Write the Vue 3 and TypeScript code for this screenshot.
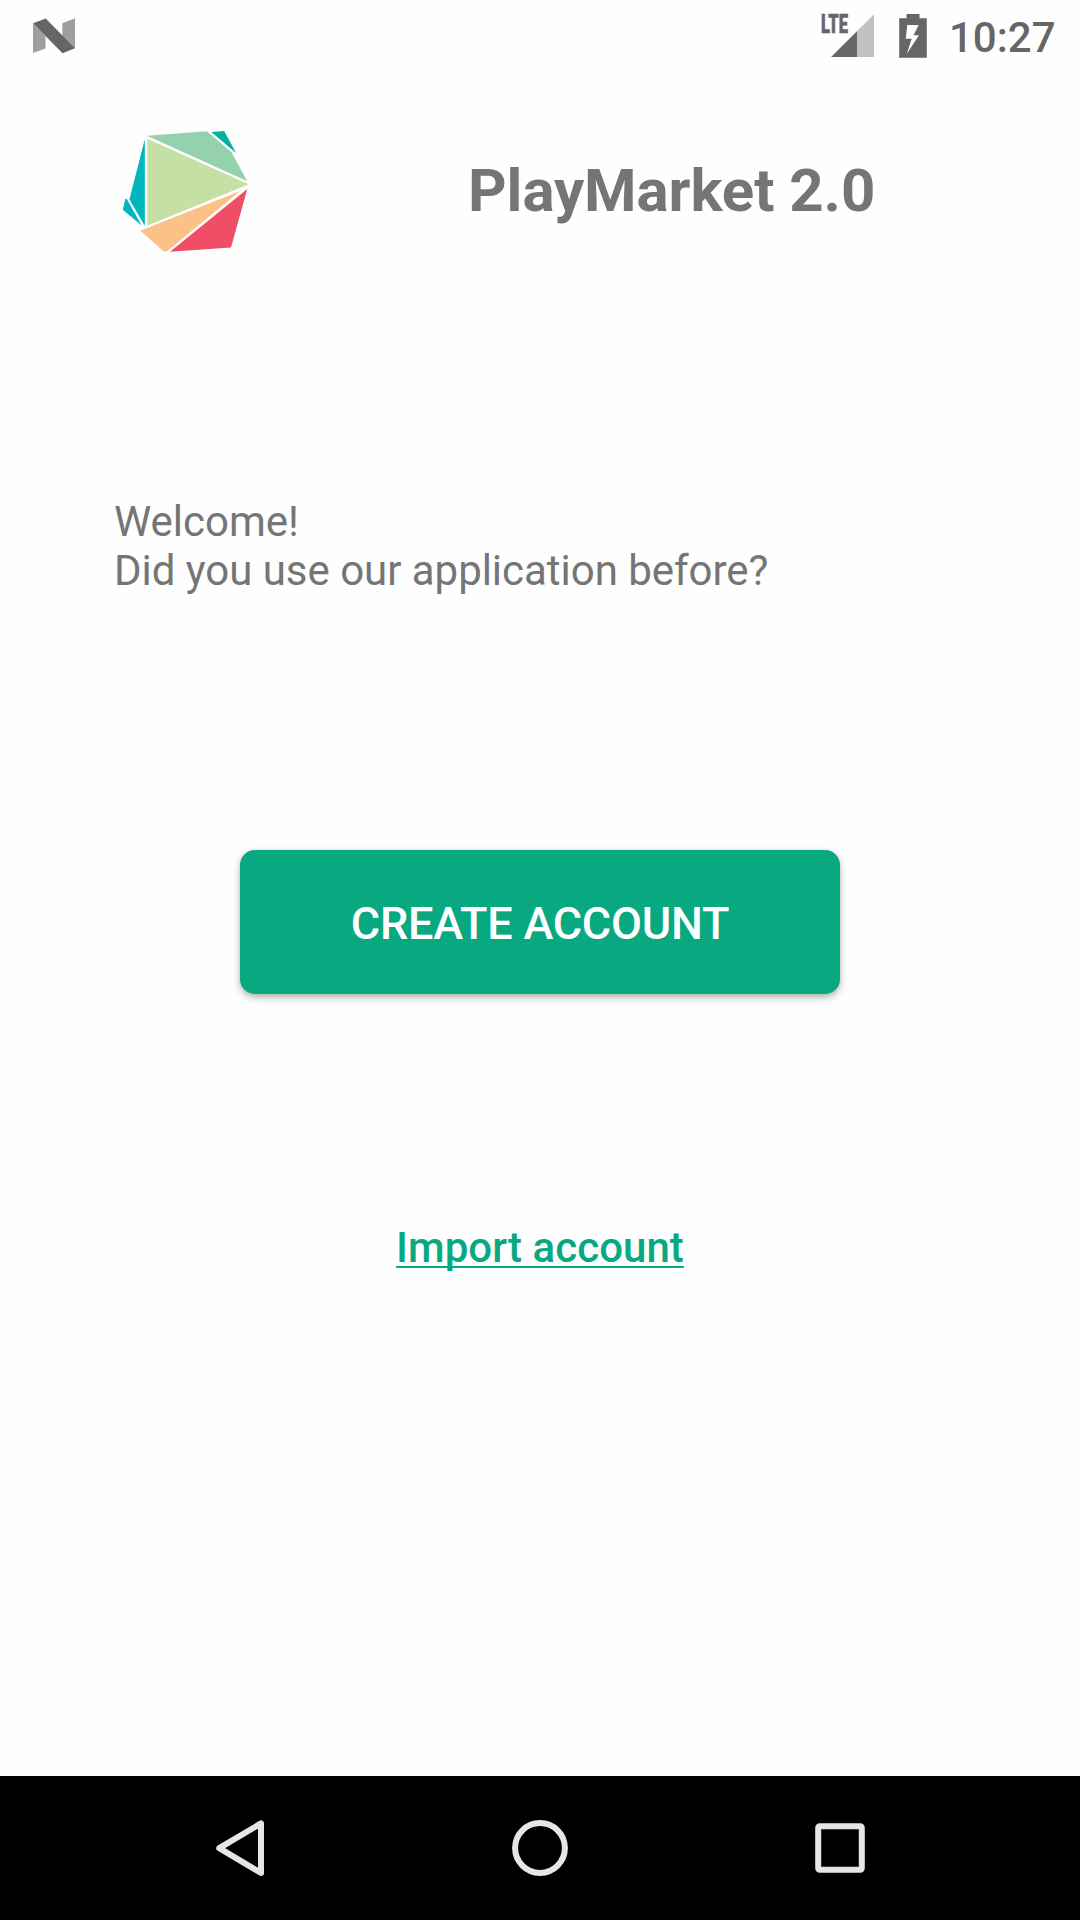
<script setup lang="ts">
interface Facet {
  points: string
  fill: string
}

const facets: Facet[] = [
  { points: '37.3,18.7 37.3,105.7 138.5,64.3', fill: '#c5e0a5' },
  { points: '37,15.7 97,11.2 121.5,32.3 137.3,61.2', fill: '#95d1ad' },
  { points: '101.3,12 114.2,11 126,33', fill: '#00b29d' },
  { points: '34.8,19.3 34.8,105.7 19.4,79.5', fill: '#00b7bb' },
  { points: '15.5,78.5 16.8,79 31.6,105.6 12.8,89.7', fill: '#00b7bb' },
  { points: '30.3,110.7 130.3,71 57,131.3 54,131.7', fill: '#fcc187' },
  { points: '137.3,69 121,127.5 60,131.8', fill: '#f04e66' },
]

const greeting: string[] = ['Welcome!', 'Did you use our application before?']
</script>

<template>
  <div class="screen">
    <header class="status">
      <svg class="notif" width="80" height="72" viewBox="0 0 80 72">
        <path d="M13 23.5 25.5 36V48.5L13 53zM42.3 23.3 55 18.3V48.5L42.3 36z" fill="#9f9f9f" />
        <path d="M13 23.3 25.7 18.5 55 48.3 42.5 53.3z" fill="#666" />
      </svg>
      <svg class="indicators" width="140" height="72" viewBox="0 0 140 72">
        <text class="lte" x="21" y="33.4" textLength="27" lengthAdjust="spacingAndGlyphs">LTE</text>
        <path d="M74 14.3V57H31.2z" fill="#c2c2c2" />
        <path d="M57 31.3V57H31.2z" fill="#666" />
        <path
          fill="#666"
          fill-rule="evenodd"
          d="M106.5 14h13v4.3h7.3v39.4H99.2V18.3h7.3zM107.3 25 105.7 38.7H111.7L106.7 54 119 35.3H113.5L118.7 25z"
        />
      </svg>
      <time class="clock">10:27</time>
    </header>

    <main class="content">
      <div class="brand">
        <svg class="logo" width="150" height="140" viewBox="0 0 150 140">
          <polygon v-for="(f, i) in facets" :key="i" :points="f.points" :fill="f.fill" />
        </svg>
        <h1 class="title">PlayMarket 2.0</h1>
      </div>
      <p class="greeting">
        <span v-for="line in greeting" :key="line" class="line">{{ line }}</span>
      </p>
      <button class="create" type="button">CREATE ACCOUNT</button>
      <a class="import">Import account</a>
    </main>

    <nav class="navbar">
      <svg width="60" height="72" viewBox="0 0 60 72">
        <path d="M9.2 36.2 51 11.400V61z" />
      </svg>
      <svg width="60" height="72" viewBox="0 0 60 72">
        <circle cx="30" cy="36" r="24.9" />
      </svg>
      <svg width="60" height="72" viewBox="0 0 60 72">
        <rect x="8.2" y="14.2" width="43.6" height="43.6" rx="1.5" />
      </svg>
    </nav>
  </div>
</template>

<style>
body {
  margin: 0;
  background: #fff;
}
</style>

<style scoped>
.screen {
  display: flex;
  flex-direction: column;
  width: 1080px;
  height: 1920px;
  overflow: hidden;
  background: #fefefe;
  color: #757575;
  font-family: Roboto, sans-serif;
}

.status {
  display: flex;
  flex: none;
  height: 72px;
  padding: 0 24px 0 20px;
}

.status svg {
  display: block;
  flex: none;
}

.indicators {
  margin-left: auto;
}

.lte {
  fill: #666;
  stroke: #666;
  stroke-width: 0.6px;
  font: 900 26px Roboto, sans-serif;
}

.clock {
  width: 107px;
  margin-left: 9px;
  color: #666;
  font-size: 42px;
  font-weight: 500;
  line-height: 76px;
  white-space: nowrap;
}

.content {
  display: flex;
  flex: 1;
  flex-direction: column;
  align-items: center;
}

.brand {
  display: flex;
  align-self: flex-start;
  align-items: center;
  gap: 208px;
  height: 140px;
  margin: 48px 0 0 110px;
}

.title {
  margin: 0;
  padding-top: 2px;
  font-size: 60px;
  font-weight: 700;
  letter-spacing: -0.08px;
  line-height: 70px;
  white-space: nowrap;
}

.greeting {
  align-self: flex-start;
  margin: 237px 0 0 114px;
  font-size: 42px;
  letter-spacing: -0.03px;
  line-height: 49px;
}

.line {
  display: block;
}

.create {
  width: 600px;
  height: 144px;
  margin: 255px 0 0;
  padding: 3px 0 0;
  border: 0;
  border-radius: 15px;
  background: #08a880;
  box-shadow: 0 4px 7px rgba(0, 0, 0, 0.26), 0 0 4px rgba(0, 0, 0, 0.1);
  color: #fff;
  font: 500 45px Roboto, sans-serif;
  letter-spacing: -0.24px;
}

.import {
  margin-top: 229px;
  color: #08a880;
  font-size: 42px;
  font-weight: 500;
  letter-spacing: 0.04px;
  line-height: 50px;
  text-decoration: underline;
  text-decoration-skip-ink: none;
  text-decoration-thickness: 2px;
  text-underline-offset: 4px;
}

.navbar {
  display: flex;
  flex: none;
  align-items: center;
  justify-content: space-between;
  height: 144px;
  padding: 0 210px;
  background: #000;
}

.navbar svg {
  display: block;
  fill: none;
  stroke: #e6e6e6;
  stroke-width: 6px;
  stroke-linejoin: round;
}
</style>
